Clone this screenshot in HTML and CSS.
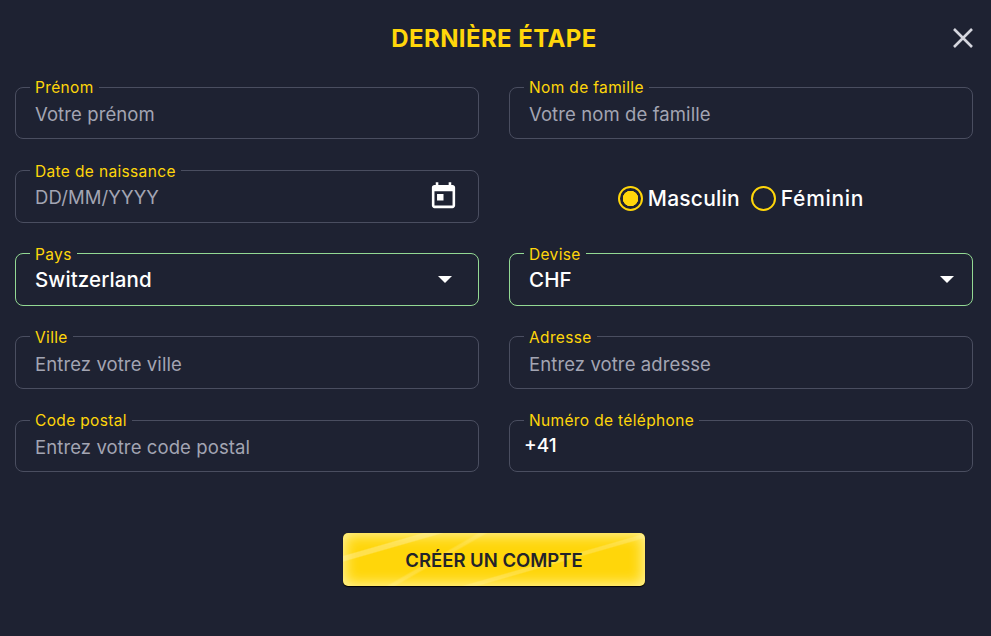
FILE: index.html
```html
<!DOCTYPE html>
<html lang="fr">
<head>
<meta charset="utf-8">
<title>Dernière étape</title>
<link rel="stylesheet" href="styles.css">
</head>
<body>
<main class="modal">
  <header class="head">
    <h1 class="title">DERNIÈRE ÉTAPE</h1>
    <button class="close" type="button" aria-label="Fermer">
      <svg viewBox="0 0 20 20" width="20" height="20"><path d="M1 1l18 18M19 1L1 19"/></svg>
    </button>
  </header>
  <form class="grid">
    <div class="field"><span class="label">Prénom</span><span class="ph">Votre prénom</span></div>
    <div class="field"><span class="label">Nom de famille</span><span class="ph">Votre nom de famille</span></div>
    <div class="field">
      <span class="label">Date de naissance</span><span class="ph">DD/MM/YYYY</span>
      <svg class="cal" viewBox="0 0 24 24" width="31" height="31"><path d="M19 3h-1V1h-2v2H8V1H6v2H5c-1.11 0-1.99.9-1.99 2L3 19c0 1.1.89 2 2 2h14c1.1 0 2-.9 2-2V5c0-1.1-.9-2-2-2zm0 16H5V8h14v11zM7 10h5v5H7z"/></svg>
    </div>
    <div class="radios">
      <span class="radio on"><i class="dot"></i>Masculin</span>
      <span class="radio"><i class="dot"></i>Féminin</span>
    </div>
    <div class="field ok"><span class="label">Pays</span><span class="val">Switzerland</span><i class="caret inset"></i></div>
    <div class="field ok"><span class="label">Devise</span><span class="val">CHF</span><i class="caret"></i></div>
    <div class="field"><span class="label">Ville</span><span class="ph">Entrez votre ville</span></div>
    <div class="field"><span class="label">Adresse</span><span class="ph">Entrez votre adresse</span></div>
    <div class="field"><span class="label">Code postal</span><span class="ph">Entrez votre code postal</span></div>
    <div class="field tel"><span class="label">Numéro de téléphone</span><span class="val">+41</span></div>
  </form>
  <div class="actions">
    <button class="cta" type="button">CRÉER UN COMPTE</button>
  </div>
</main>
</body>
</html>
```
FILE: styles.css
```css
* { box-sizing: border-box; }
html, body { margin: 0; height: 100%; }
body {
  background: #1e2232;
  font-family: Inter, "Liberation Sans", sans-serif;
  overflow: hidden;
}
.modal { width: 991px; height: 636px; padding: 0 18px 0 15px; }
.head {
  height: 86.7px;
  display: flex;
  justify-content: center;
  padding-top: 24px;
  position: relative;
}
.title {
  margin: 0;
  color: #ffd60a;
  font-size: 24px;
  line-height: 30px;
  font-weight: 700;
  letter-spacing: .4px;
}
.close {
  position: absolute;
  right: 0;
  top: 28px;
  padding: 0;
  width: 20px;
  height: 20px;
  border: 0;
  background: none;
}
.close svg { display: block; fill: none; stroke: #d5d6de; stroke-width: 2.6; }
.grid {
  display: grid;
  grid-template-columns: 464px 464px;
  column-gap: 30px;
  grid-auto-rows: 52.7px;
  row-gap: 30.54px;
}
.field {
  position: relative;
  display: flex;
  align-items: center;
  padding: 0 19px;
  border: 1px solid #4a4e60;
  border-radius: 8px;
}
.field.ok { border-color: #93d993; }
.field.tel { padding-left: 14px; }
.label {
  position: absolute;
  left: 14px;
  top: -8.4px;
  padding: 0 5px;
  background: #1e2232;
  color: #ffd60a;
  font-size: 15.5px;
  line-height: 18px;
  letter-spacing: .35px;
}
.ph { color: #a3a5b3; font-size: 18.5px; letter-spacing: .1px; padding-top: 2px; }
.val { color: #fff; font-size: 20.5px; font-weight: 500; letter-spacing: .1px; }
.field.tel .val { font-size: 19px; letter-spacing: 0; }
.cal { position: absolute; right: 19px; top: 10px; fill: #fff; }
.caret {
  position: absolute;
  right: 18px;
  top: 22px;
  border-left: 7.5px solid transparent;
  border-right: 7.5px solid transparent;
  border-top: 7.5px solid #fff;
}
.caret.inset { right: 26px; }
.radios {
  display: flex;
  align-items: center;
  justify-content: center;
  gap: 11px;
  padding-top: 4px;
}
.radio {
  display: flex;
  align-items: center;
  gap: 5px;
  color: #fff;
  font-size: 21px;
  font-weight: 500;
  letter-spacing: .2px;
}
.radio + .radio { letter-spacing: .7px; }
.dot {
  width: 25px;
  height: 25px;
  border: 2px solid #ffd60a;
  border-radius: 50%;
  display: block;
}
.radio.on .dot { background: radial-gradient(circle, #ffd60a 0 7.5px, transparent 8px); }
.actions { display: flex; justify-content: center; padding-top: 60.8px; }
.cta {
  width: 302px;
  height: 53px;
  border: 0;
  border-radius: 5px;
  color: #23232b;
  font: 600 18.5px Inter, "Liberation Sans", sans-serif;
  background:
    linear-gradient(164deg, transparent 0 16%, rgba(255,255,255,.28) 17% 20%, transparent 21%),
    linear-gradient(164deg, transparent 0 62%, rgba(255,255,255,.2) 63% 65%, transparent 66%),
    linear-gradient(150deg, transparent 0 34%, rgba(255,255,255,.18) 35% 36%, transparent 37%),
    #ffd60a;
  box-shadow: inset 0 0 14px 2px rgba(255,245,170,.95), 0 1px 1px #000;
}
```
